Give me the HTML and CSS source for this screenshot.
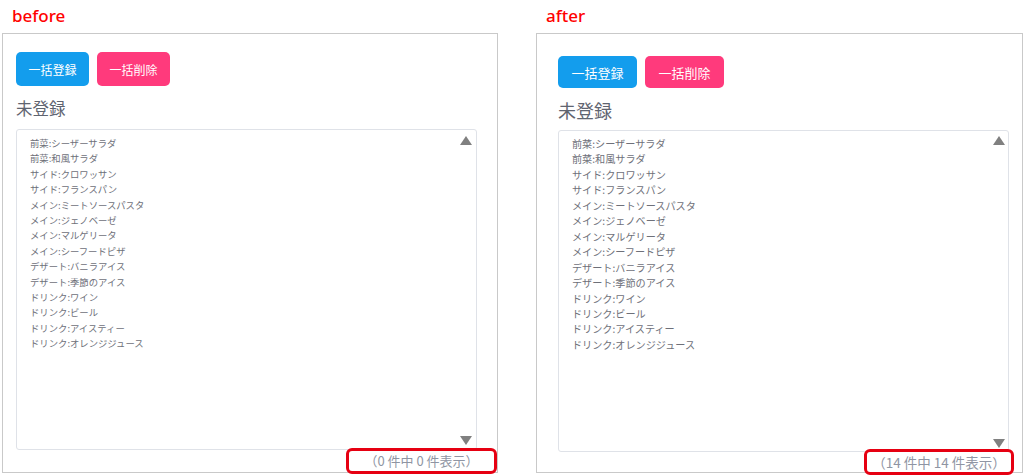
FILE: index.html
```html
<!DOCTYPE html>
<html lang="ja">
  <head>
    <meta charset="utf-8">
    <title>before / after</title>
    <link rel="stylesheet" href="styles.css">
  </head>
  <body>
    <div class="compare">
      <section class="side before">
        <h2 class="side-label">before</h2>
        <div class="panel">
          <div class="actions">
            <button class="action-btn add">一括登録</button>
            <button class="action-btn del">一括削除</button>
          </div>
          <h3 class="list-title">未登録</h3>
          <div class="list-box">
            <ul class="items">
              <li>前菜:シーザーサラダ</li>
              <li>前菜:和風サラダ</li>
              <li>サイド:クロワッサン</li>
              <li>サイド:フランスパン</li>
              <li>メイン:ミートソースパスタ</li>
              <li>メイン:ジェノベーゼ</li>
              <li>メイン:マルゲリータ</li>
              <li>メイン:シーフードピザ</li>
              <li>デザート:バニラアイス</li>
              <li>デザート:季節のアイス</li>
              <li>ドリンク:ワイン</li>
              <li>ドリンク:ビール</li>
              <li>ドリンク:アイスティー</li>
              <li>ドリンク:オレンジジュース</li>
            </ul>
            <span class="arrow up"></span>
            <span class="arrow down"></span>
          </div>
          <div class="count">（0 件中 0 件表示）</div>
        </div>
      </section>
      <section class="side after">
        <h2 class="side-label">after</h2>
        <div class="panel">
          <div class="actions">
            <button class="action-btn add">一括登録</button>
            <button class="action-btn del">一括削除</button>
          </div>
          <h3 class="list-title">未登録</h3>
          <div class="list-box">
            <ul class="items">
              <li>前菜:シーザーサラダ</li>
              <li>前菜:和風サラダ</li>
              <li>サイド:クロワッサン</li>
              <li>サイド:フランスパン</li>
              <li>メイン:ミートソースパスタ</li>
              <li>メイン:ジェノベーゼ</li>
              <li>メイン:マルゲリータ</li>
              <li>メイン:シーフードピザ</li>
              <li>デザート:バニラアイス</li>
              <li>デザート:季節のアイス</li>
              <li>ドリンク:ワイン</li>
              <li>ドリンク:ビール</li>
              <li>ドリンク:アイスティー</li>
              <li>ドリンク:オレンジジュース</li>
            </ul>
            <span class="arrow up"></span>
            <span class="arrow down"></span>
          </div>
          <div class="count">（14 件中 14 件表示）</div>
        </div>
      </section>
    </div>
  </body>
</html>
```

FILE: styles.css
```css
html, body {
  margin: 0;
  padding: 0;
  background: #fff;
}
body {
  width: 1024px;
  height: 476px;
  overflow: hidden;
  font-family: "Noto Sans CJK JP", "Noto Sans", sans-serif;
}
.compare {
  display: flex;
  padding-left: 2px;
}
.side {
  display: flex;
  flex-direction: column;
}
.before {
  width: 496px;
  margin-right: 38px;
}
.after {
  width: 487px;
}
.side-label {
  margin: 0;
  height: 33px;
  padding: 4px 0 0 10px;
  box-sizing: border-box;
  font-family: "Noto Sans", sans-serif;
  font-size: 17px;
  line-height: 23px;
  font-weight: 500;
  color: #f00;
}
.panel {
  position: relative;
  height: 440px;
  box-sizing: border-box;
  border: 1px solid #c9c9c9;
  padding: 18px 20px 0 13px;
}
.after .panel {
  padding: 22px 13px 0 21px;
}
.actions {
  display: flex;
  gap: 8px;
}
.action-btn {
  width: 73px;
  height: 34px;
  padding: 0;
  border: 1px solid transparent;
  border-radius: 5px;
  color: #fff;
  font-family: inherit;
  font-size: 12px;
  white-space: nowrap;
}
.after .action-btn {
  width: 79px;
  height: 32px;
  font-size: 13px;
}
.add {
  background-color: #139ded;
}
.del {
  background-color: #ff3a7c;
}
.list-title {
  margin: 9px 0 8px;
  height: 26px;
  font-size: 16.5px;
  line-height: 26px;
  font-weight: 400;
  color: #5f6470;
}
.after .list-title {
  margin: 9px 0 7px;
  font-size: 18px;
}
.list-box {
  position: relative;
  height: 321px;
  box-sizing: border-box;
  border: 1px solid #dfe2e8;
  border-radius: 3px;
  padding: 6px 13px 0;
}
.after .list-box {
  height: 322px;
  padding-top: 5px;
}
.items {
  margin: 0;
  padding: 0;
  list-style: none;
  font-size: 9.35px;
  line-height: 15.4px;
  color: #6e7079;
}
.after .items {
  font-size: 10.15px;
  line-height: 15.45px;
}
.arrow {
  position: absolute;
  right: 4px;
  width: 0;
  height: 0;
  border-left: 6px solid transparent;
  border-right: 6px solid transparent;
}
.arrow.up {
  top: 6px;
  border-bottom: 9px solid #808080;
}
.arrow.down {
  bottom: 4px;
  border-top: 9px solid #808080;
}
.after .arrow {
  right: 3px;
}
.after .arrow.up {
  top: 5px;
}
.after .arrow.down {
  bottom: 3px;
}
.count {
  position: absolute;
  right: 0;
  bottom: -2px;
  width: 151px;
  height: 26px;
  box-sizing: border-box;
  border: 3px solid #e60012;
  border-radius: 6px;
  background: #fff;
  text-align: center;
  font-size: 13px;
  line-height: 20px;
  color: #8f95a3;
  white-space: nowrap;
}
.after .count {
  right: 8px;
  bottom: -3px;
  width: 150px;
  font-size: 13.5px;
}
```
